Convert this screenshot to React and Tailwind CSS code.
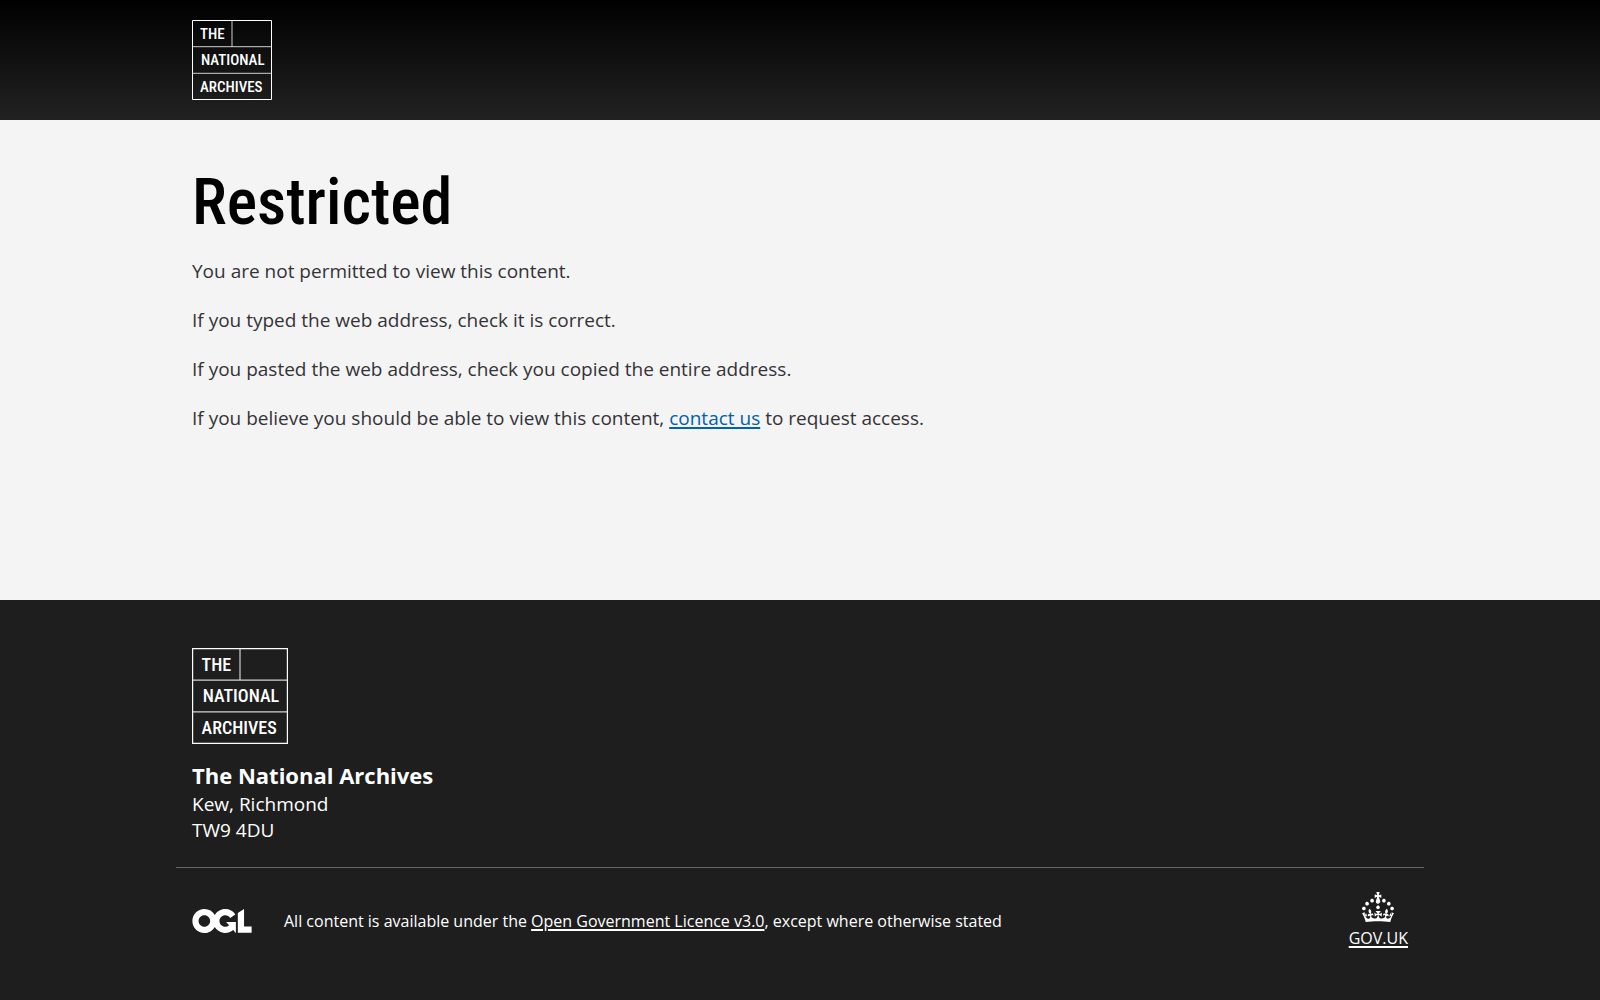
import React from 'react';

const LogoMark = ({ className }) => (
  <svg className={className} viewBox="0 0 80 80" fill="none" role="img" aria-label="The National Archives">
    <path d="M0.5 0.5h79v79h-79z" stroke="#fff" />
    <path d="M0 26.7h80M0 53.3h80M40 0v26.7" stroke="#fff" strokeOpacity="0.8" />
    <g fill="#fff" fontFamily="'Roboto Condensed', Roboto, sans-serif" fontWeight="500" fontSize="15">
      <text x="8" y="19">THE</text>
      <text x="9" y="45">NATIONAL</text>
      <text x="8" y="72">ARCHIVES</text>
    </g>
  </svg>
);

const OglLogo = () => (
  <svg className="w-15 h-6 shrink-0" viewBox="0 0 483.2 195.7" fill="#fff" aria-hidden="true">
    <path d="M421.5 142.8V.1l-50.7 32.3v161.1h112.4v-50.7zm-122.3-9.6A47.12 47.12 0 0 1 221 97.8c0-26 21.1-47.1 47.1-47.1 16.7 0 31.4 8.7 39.7 21.8l42.7-27.2A97.63 97.63 0 0 0 268.1 0c-36.5 0-68.3 20.1-85.1 49.7A98 98 0 0 0 97.8 0C43.9 0 0 43.9 0 97.8s43.9 97.8 97.8 97.8c36.5 0 68.3-20.1 85.1-49.7a97.76 97.76 0 0 0 149.6 25.4l19.4 22.2h3v-87.8h-80l24.3 27.5zM97.8 145c-26 0-47.1-21.1-47.1-47.1s21.1-47.1 47.1-47.1 47.1 21.1 47.1 47.1S123.8 145 97.8 145" />
  </svg>
);

const Crown = () => (
  <svg className="w-8 h-[30px]" viewBox="0 0 32 30" fill="#fff" aria-hidden="true">
    <path d="M22.6 10.4c-1 .4-2-.1-2.4-1-.4-.9.1-2 1-2.4.9-.4 2 .1 2.4 1s-.1 2-1 2.4m-5.9 6.7c-.9.4-2-.1-2.4-1-.4-.9.1-2 1-2.4.9-.4 2 .1 2.4 1s-.1 2-1 2.4m10.8-3.7c-1 .4-2-.1-2.4-1-.4-.9.1-2 1-2.4.9-.4 2 .1 2.4 1s0 2-1 2.4m3.3 4.8c-1 .4-2-.1-2.4-1-.4-.9.1-2 1-2.4.9-.4 2 .1 2.4 1s-.1 2-1 2.4M17 4.7l2.3 1.2V2.5l-2.3.7-.2-.2.9-3h-3.4l.9 3-.2.2c-.1.1-2.3-.7-2.3-.7v3.4L15 4.7c.1.1.1.2.2.2l-1.3 4c-.1.2-.1.4-.1.6 0 1.1.8 2 1.9 2.2h.7c1-.2 1.9-1.1 1.9-2.1 0-.2 0-.4-.1-.6l-1.3-4c-.1-.2 0-.2.1-.3m-7.6 5.7c.9.4 2-.1 2.4-1 .4-.9-.1-2-1-2.4-.9-.4-2 .1-2.4 1s0 2 1 2.4m-5 3c.9.4 2-.1 2.4-1 .4-.9-.1-2-1-2.4-.9-.4-2 .1-2.4 1s.1 2 1 2.4m-3.2 4.8c.9.4 2-.1 2.4-1 .4-.9-.1-2-1-2.4-.9-.4-2 .1-2.4 1s0 2 1 2.4m14.8 11c4.4 0 8.6.3 12.3.8 1.1-4.5 2.4-7 3.7-8.8l-2.5-.9c.2 1.3.3 1.9 0 2.7-.4-.4-.8-1.1-1.1-2.3l-1.2 4c.7-.5 1.3-.8 2-.9-1.1 2.5-2.6 3.1-3.5 3-1.1-.2-1.7-1.2-1.5-2.1.3-1.2 1.5-1.5 2.1-.1 1.1-2.3-.8-3-2-2.3 1.9-1.9 2.1-3.5.6-5.6-2.1 1.6-2.1 3.2-1.2 5.5-1.2-1.4-3.2-.6-2.5 1.6.9-1.4 2.1-.5 1.9.8-.2 1.1-1.7 2.1-3.5 1.9-2.7-.2-2.9-2.1-2.9-3.6.7-.1 1.9.5 2.9 1.9l.4-4.3c-1.1 1.1-2.1 1.4-3.2 1.4.4-1.2 2.1-3 2.1-3h-5.4s1.7 1.9 2.1 3c-1.1 0-2.1-.2-3.2-1.4l.4 4.3c1-1.4 2.2-2 2.9-1.9-.1 1.5-.2 3.4-2.9 3.6-1.9.2-3.4-.8-3.5-1.9-.2-1.3 1-2.2 1.9-.8.7-2.3-1.2-3-2.5-1.6.9-2.2.9-3.9-1.2-5.5-1.5 2-1.3 3.7.6 5.6-1.2-.7-3.1 0-2 2.3.6-1.4 1.8-1.1 2.1.1.2.9-.3 1.9-1.5 2.1-.9.2-2.4-.5-3.5-3 .6 0 1.2.3 2 .9l-1.2-4c-.3 1.1-.7 1.9-1.1 2.3-.3-.8-.2-1.4 0-2.7l-2.9.9C1.3 23 2.6 25.5 3.7 30c3.7-.5 7.9-.8 12.3-.8" />
  </svg>
);

const App = () => {
  return (
    <div className="min-h-screen flex flex-col bg-[#1e1e1e] font-['Open_Sans',sans-serif]">
      {/* Header */}
      <header className="bg-linear-to-b/srgb from-black to-[#222] py-5">
        <div className="max-w-[1248px] mx-auto px-4">
          <a href="/" className="inline-block align-top">
            <LogoMark className="w-20 h-20" />
          </a>
        </div>
      </header>

      {/* Content */}
      <main className="bg-[#f4f4f4] pt-12 pb-[167px]">
        <div className="max-w-[1248px] mx-auto px-4 text-[19px] leading-[29px] text-[#343338]">
          <h1 className="font-['Roboto_Condensed','Roboto',sans-serif] font-medium text-[64px] leading-[69px] text-black mb-5">
            Restricted
          </h1>
          <div className="space-y-5">
            <p>You are not permitted to view this content.</p>
            <p>If you typed the web address, check it is correct.</p>
            <p>If you pasted the web address, check you copied the entire address.</p>
            <p>
              If you believe you should be able to view this content,{' '}
              <a href="/contact-us" className="text-[#0062a8] underline decoration-2 underline-offset-2">
                contact us
              </a>{' '}
              to request access.
            </p>
          </div>
        </div>
      </main>

      {/* Footer */}
      <footer className="text-white pt-12">
        <div className="max-w-[1248px] mx-auto">
          <div className="px-4 pb-6">
            <a href="/" className="inline-block align-top">
              <LogoMark className="w-24 h-24" />
            </a>
            <address className="not-italic text-[19px] leading-[26px] mt-4">
              <strong className="block text-[22px] leading-[31px]">The National Archives</strong>
              Kew, Richmond
              <br />
              TW9 4DU
            </address>
          </div>
          <div className="border-t border-[#666] px-4 pt-6 flex justify-between items-center">
            <div className="flex items-center gap-8">
              <OglLogo />
              <p>
                All content is available under the{' '}
                <a href="/open-government-licence" className="underline decoration-2 underline-offset-2">
                  Open Government Licence v3.0
                </a>
                , except where otherwise stated
              </p>
            </div>
            <a href="/gov-uk" className="flex flex-col items-center gap-1 underline decoration-2 underline-offset-2">
              <Crown />
              <span>GOV.UK</span>
            </a>
          </div>
        </div>
      </footer>
    </div>
  );
};

export default App;
